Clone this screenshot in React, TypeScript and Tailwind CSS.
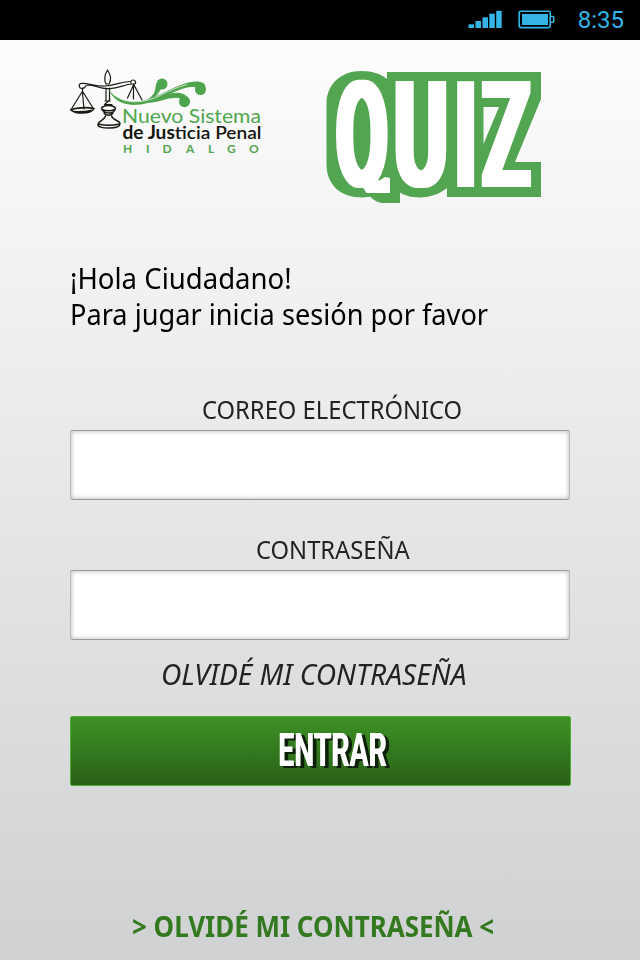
import React from "react";

function StatusBar() {
  return (
    <header className="flex h-10 items-center justify-end bg-black pr-4 font-['Roboto',sans-serif] text-[24px] text-[#33b5e5]">
      <svg className="mr-4 mb-0.5 h-[18px] w-[34px]" viewBox="0 0 34 18" fill="#33b5e5">
        <rect x="0.5" y="14.3" width="5.5" height="3.7" />
        <rect x="7.5" y="11" width="5.5" height="7" />
        <rect x="14.5" y="7.3" width="5.5" height="10.7" />
        <rect x="21.3" y="3.7" width="5.5" height="14.3" />
        <rect x="28.2" y="0.8" width="5.5" height="17.2" />
      </svg>
      <svg className="mr-[23px] mb-0.5 h-[19px] w-[37px]" viewBox="0 0 37 19" fill="none" stroke="#33b5e5">
        <rect x="1.2" y="1.2" width="31" height="16.4" rx="1.5" strokeWidth="1.6" />
        <rect x="4" y="4" width="26" height="11" fill="#33b5e5" stroke="none" />
        <path d="M32.5 6.5h2.200q1 0 1 1v3.700q0 1-1 1h-2.200" strokeWidth="1.5" />
      </svg>
      <span className="leading-none">8:35</span>
    </header>
  );
}

function JusticeLogo() {
  return (
    <svg className="h-[90px] w-[194px]" viewBox="70 68 194 90">
      <g fill="none" stroke="#1a1a14" strokeWidth="1.2" strokeLinecap="round" strokeLinejoin="round">
        <path d="M107.500 70c-3 5-4 9-1.500 14h3c3-5 1.500-9-1.500-14z" />
        <path d="M81 83.500c-3 1-2 5 1 5 4 0 2-3 6-3.500 7 0 12 4 20 3.500 10 1 17-5 25-4.500 4 1 3-4 0-4-3 0-2 3-2 3M81 83.500c6-1 14 3 24 2.500 10-.5 14-4 25-4.500" />
        <path d="M106 88v13M109.500 88v13M105 104l5-4M105 101h5M104.500 104.500h7" />
        <path d="M82.500 88v4M82 92L72 108M82.500 93l1.500 16M83 92l10 16" />
        <path d="M70.500 109.500c8-2 16-2.500 23.500-1-2 3-7 4.500-12 4.500-5 0-9-1-11.500-3.500zM74 111.500c6 .5 12 0 17-1" strokeWidth="1.600" />
        <path d="M133.500 85l-6 13M134 85l8 15M133.500 84v15" />
        <path d="M101.500 108c3-3.500 11-3.500 14 0 0 3-3 5-7 5-3 0-7-2-7-5zM102 109.500c4 1.500 9 1.500 13 0M105 105h7M104 113c2 3 7 3 9 0" strokeWidth="1.500" />
        <path d="M105.500 116c-1 4-7 5-7.500 8s4 4 11 4 11-1.500 11-4.500-7-3-8.500-7.500M98.500 124c6 1.500 14 1.500 21 0" strokeWidth="1.500" />
      </g>
      <g fill="#4fa54e">
        <path d="M108.500 89.500c8 11 20 13 32 11.500 14-2 28-12 43-17 8-3 20-4 22 2l-8 2c-8-4-24 4-33 8.500-11 5.500-21 8.500-31 8.500-12-.5-21-6-25-15.500z" />
        <path d="M138 102c9-1 13-4 16-9 2-4 1-8 3-10l5 4c-3 5-4 8-9 11-5 3.500-9 4.500-15 4z" />
        <path d="M144 102c12-1 24-11 36-9 5 1 9 4 10 8l-7 0c-3-5-10-3-16-2-8 2-15 5-23 3z" />
        <circle cx="162" cy="84" r="5.500" />
        <circle cx="200.500" cy="89.500" r="5.500" />
        <circle cx="184.500" cy="101.700" r="5.500" />
      </g>
      <path d="M120 98.500c12 6 28 3 39-2.500 10-5 18-9 28-11.500" fill="none" stroke="#fbfbfb" strokeWidth="0.700" />
      <text x="122" y="122.700" fontFamily="Lato, sans-serif" fontSize="20" fill="#4fa54e" textLength="139" lengthAdjust="spacingAndGlyphs">
        Nuevo Sistema
      </text>
      <text x="122.500" y="139.300" fontFamily="Lato, sans-serif" fontSize="18" fontWeight="600" fill="#14140f" textLength="139" lengthAdjust="spacingAndGlyphs">
        <tspan fontWeight="700">de Jus</tspan>ticia Penal
      </text>
      <text x="123 146 162.500 186 208 227 249" y="153" fontFamily="Lato, sans-serif" fontSize="12" fontWeight="700" fill="#4fa54e">
        HIDALGO
      </text>
    </svg>
  );
}

function QuizLogo() {
  return (
    <svg className="h-[160px] w-[216px]" viewBox="326 70 216 160">
      <defs>
        <filter id="widen" x="326" y="70" width="216" height="123" filterUnits="userSpaceOnUse">
          <feMorphology operator="dilate" radius="3 0" />
        </filter>
      </defs>
      <path
        fill="#52a551"
        d="M361.500 71C341 71 326.500 84 326.500 104v60c0 21 14 33.500 36 33.500l8-.8c4 4 8 6.300 14 6.300h15.500v-10.500c9 6.500 32 8 47-4.500v9h94v-35h-26l26-63V72H387v7c-6-5-14-8-25.500-8z"
      />
      <path fill="#f8f9f9" d="M483.500 107H499l-15.500 37z" />
      <path fill="#fff" d="M372 186c3 5 7 7 12 7h6v-15l-5-1-8 5z" />
      <g filter="url(#widen)">
        <text
          transform="translate(0 187) scale(0.52 1)"
          y="0"
          fontFamily="Roboto, sans-serif"
          fontWeight="700"
          fontSize="148"
          fill="#fff"
        >
          <tspan x="646" textLength="99.500" lengthAdjust="spacingAndGlyphs">Q</tspan>
          <tspan x="757.500" textLength="103.500" lengthAdjust="spacingAndGlyphs">U</tspan>
          <tspan x="874.500" textLength="42" lengthAdjust="spacingAndGlyphs">I</tspan>
          <tspan x="927" textLength="93" lengthAdjust="spacingAndGlyphs">Z</tspan>
        </text>
      </g>
    </svg>
  );
}

function Field({ id, label, type, labelClass }: { id: string; label: string; type: string; labelClass: string }) {
  return (
    <div className="flex h-[110px] flex-col">
      <label htmlFor={id} className={`h-10 whitespace-nowrap text-[25px] leading-[38px] text-[#222] ${labelClass}`}>
        {label}
      </label>
      <input
        id={id}
        type={type}
        className="h-[70px] w-[500px] rounded-[2px] border border-x-[#b9bbbb] border-y-[#9a9c9c] bg-white px-4 text-2xl shadow-[inset_0_0_5px_rgba(0,0,0,0.3)] outline-none"
      />
    </div>
  );
}

export default function App() {
  return (
    <div className="flex h-[960px] w-[640px] flex-col overflow-hidden bg-[#e4e5e6] font-['Noto_Sans',sans-serif]">
      <StatusBar />
      <main className="flex flex-1 flex-col bg-linear-to-b from-[#fdfdfd] to-[#d0d1d3] px-[70px]">
        <div className="flex h-[220px] items-start pt-[28px]">
          <JusticeLogo />
          <div className="ml-[62px] pt-[2px]">
            <QuizLogo />
          </div>
        </div>
        <h1 className="h-[130px] text-[29px] leading-9 font-normal text-black">
          <span className="block w-max origin-left scale-x-[0.95] whitespace-nowrap">¡Hola Ciudadano!</span>
          <span className="block w-max origin-left scale-x-[0.937] whitespace-nowrap">Para jugar inicia sesión por favor</span>
        </h1>
        <form className="flex flex-col">
          <Field id="email" label="CORREO ELECTRÓNICO" type="email" labelClass="ml-[132px] w-max origin-left scale-x-[0.95]" />
          <div className="h-[30px]" />
          <Field id="password" label="CONTRASEÑA" type="password" labelClass="ml-[186px] w-max origin-left scale-x-[0.95]" />
          <p className="ml-[91px] h-[76px] w-max origin-left scale-x-[0.972] pt-[14px] text-[29px] leading-10 whitespace-nowrap text-[#222] italic">
            OLVIDÉ MI CONTRASEÑA
          </p>
          <button
            type="button"
            className="flex h-[70px] w-[501px] rounded-[2px] border border-[#4db030] bg-linear-to-b from-[#3d9225] to-[#296118] pl-[207px] font-['Roboto',sans-serif] text-[47px] leading-[65px] font-bold text-white"
          >
            <span className="block origin-left scale-x-[0.603] [text-shadow:1px_0_0_#fff,6px_2px_0_#0d210a,7px_2px_0_#0d210a]">ENTRAR</span>
          </button>
        </form>
        <a className="mt-[120px] ml-[62px] w-max origin-left scale-x-[0.896] text-[29px] leading-10 font-bold whitespace-nowrap text-[#33791f]">
          &gt; OLVIDÉ MI CONTRASEÑA &lt;
        </a>
      </main>
    </div>
  );
}
